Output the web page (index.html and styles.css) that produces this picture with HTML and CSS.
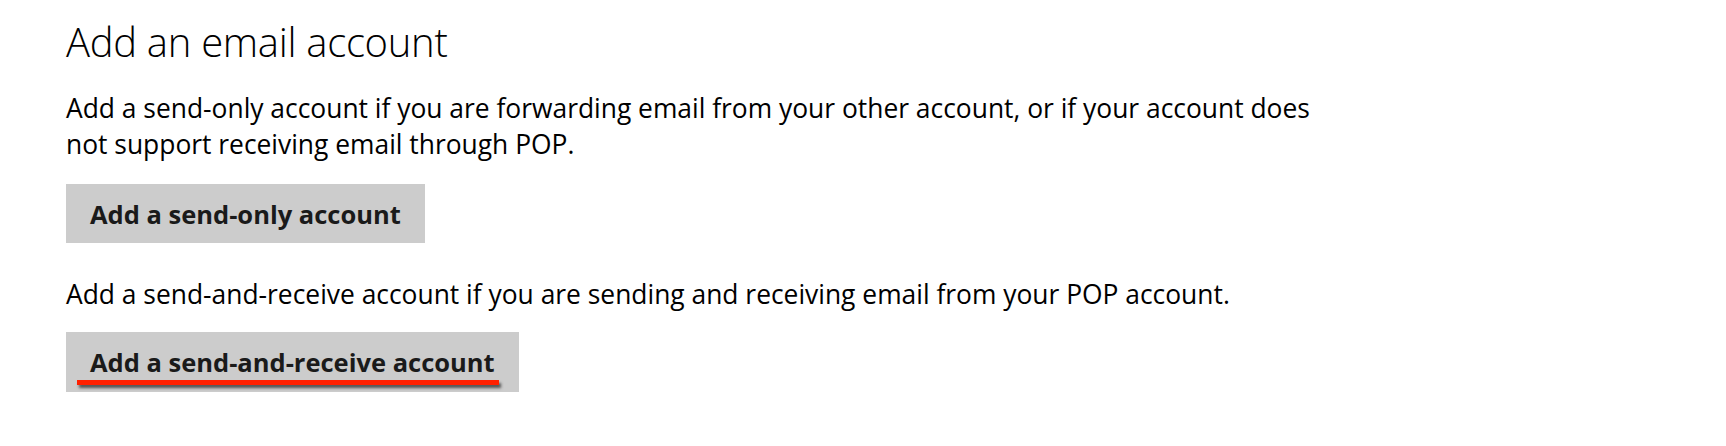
FILE: index.html
```html
<!DOCTYPE html>
<html lang="en">
<head>
    <meta charset="UTF-8">
    <meta name="viewport" content="width=device-width, initial-scale=1.0">
    <title>Add an email account</title>
    <link rel="stylesheet" href="styles.css">
</head>
<body>
    <div class="page">
        <h1>Add an email account</h1>
        <p class="note first">Add a send-only account if you are forwarding email from your other account, or if your account does not support receiving email through POP.</p>
        <button class="action">Add a send-only account</button>
        <p class="note">Add a send-and-receive account if you are sending and receiving email from your POP account.</p>
        <button class="action last">
            <span class="marked">Add a send-and-receive account</span>
        </button>
    </div>
</body>
</html>
```

FILE: styles.css
```css
body {
    margin: 0;
    background: #ffffff;
    color: #000000;
    font-family: 'Open Sans', 'Noto Sans', sans-serif;
}
.page {
    padding: 14px 0 0 66px;
}
h1 {
    margin: 0;
    font-size: 40px;
    font-weight: 300;
    line-height: 56px;
    letter-spacing: -0.3px;
}
.note {
    max-width: 1270px;
    margin: 33px 0 0;
    font-size: 26.4px;
    line-height: 36px;
}
.note.first {
    margin-top: 20px;
}
.action {
    display: block;
    margin: 22px 0 0;
    padding: 0 24px;
    height: 59px;
    border: none;
    background: #cccccc;
    color: #1a1a1a;
    font-family: inherit;
    font-size: 25.5px;
    font-weight: 700;
}
.action.last {
    margin-top: 20px;
    height: 60px;
}
.marked {
    position: relative;
}
.marked::after {
    content: '';
    position: absolute;
    left: -13px;
    right: -4px;
    bottom: -6px;
    height: 5px;
    background: #ff2000;
    box-shadow: 2px 3px 3px rgba(0, 0, 0, 0.6);
}
```
